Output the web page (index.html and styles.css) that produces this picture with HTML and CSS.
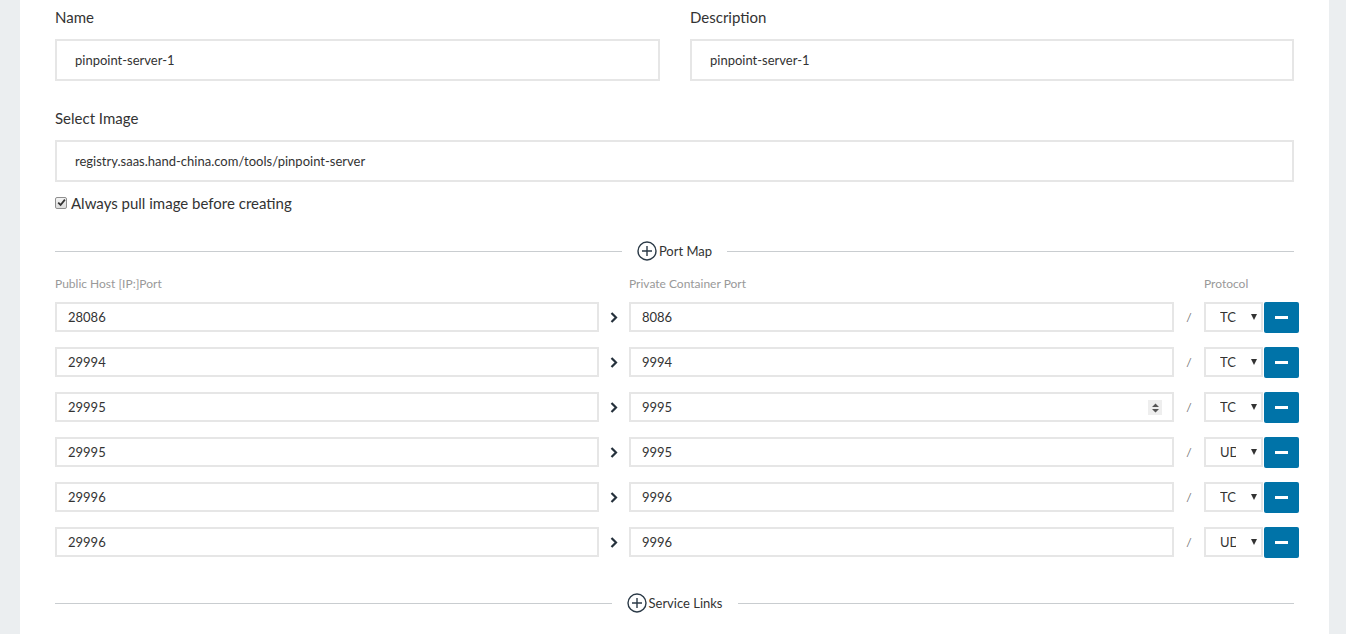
FILE: index.html
```html
<!DOCTYPE html>
<html>
<head>
<meta charset="utf-8">
<link rel="stylesheet" href="styles.css">
</head>
<body>
<div class="page">
  <div class="row2">
    <div class="field">
      <label class="lbl">Name</label>
      <div class="input big">pinpoint-server-1</div>
    </div>
    <div class="field">
      <label class="lbl">Description</label>
      <div class="input big">pinpoint-server-1</div>
    </div>
  </div>
  <div class="field image-field">
    <label class="lbl">Select Image</label>
    <div class="input big">registry.saas.hand-china.com/tools/pinpoint-server</div>
  </div>
  <div class="check">
    <span class="cbox"><svg width="9" height="9" viewBox="0 0 9 9"><path d="M1.2 4.6 L3.6 7 L7.9 1.6" fill="none" stroke="#333" stroke-width="1.8"/></svg></span>
    <span>Always pull image before creating</span>
  </div>

  <div class="divider">
    <span class="line"></span>
    <span class="dtitle"><svg class="plus" width="20" height="20" viewBox="0 0 20 20"><circle cx="10" cy="10" r="9" fill="none" stroke="#2b3a47" stroke-width="1.4"/><path d="M10 5v10M5 10h10" stroke="#2b3a47" stroke-width="1.4"/></svg>Port Map</span>
    <span class="line"></span>
  </div>

  <div class="ports">
    <div class="phead">
      <span class="c1">Public Host [IP:]Port</span>
      <span class="sep"></span>
      <span class="c2">Private Container Port</span>
      <span class="sep"></span>
      <span class="c3">Protocol</span>
    </div>
    <div class="prow">
      <div class="input small c1">28086</div>
      <span class="sep"><svg class="arrow" width="8" height="11" viewBox="0 0 8 11"><path d="M1.5 1 L6 5.5 L1.5 10" fill="none" stroke="#25313c" stroke-width="2.2"/></svg></span>
      <div class="input small c2">8086</div>
      <span class="sep slash">/</span>
      <div class="sel"><span class="seltext">TCP</span><span class="tri"></span></div>
      <button class="minus"><span></span></button>
    </div>
    <div class="prow">
      <div class="input small c1">29994</div>
      <span class="sep"><svg class="arrow" width="8" height="11" viewBox="0 0 8 11"><path d="M1.5 1 L6 5.5 L1.5 10" fill="none" stroke="#25313c" stroke-width="2.2"/></svg></span>
      <div class="input small c2">9994</div>
      <span class="sep slash">/</span>
      <div class="sel"><span class="seltext">TCP</span><span class="tri"></span></div>
      <button class="minus"><span></span></button>
    </div>
    <div class="prow">
      <div class="input small c1">29995</div>
      <span class="sep"><svg class="arrow" width="8" height="11" viewBox="0 0 8 11"><path d="M1.5 1 L6 5.5 L1.5 10" fill="none" stroke="#25313c" stroke-width="2.2"/></svg></span>
      <div class="input small c2 spinwrap">9995<span class="spin"><svg width="9" height="12" viewBox="0 0 9 12"><path d="M4.5 1.5 L8 5 H1 Z M4.5 10.5 L8 7 H1 Z" fill="#555"/></svg></span></div>
      <span class="sep slash">/</span>
      <div class="sel"><span class="seltext">TCP</span><span class="tri"></span></div>
      <button class="minus"><span></span></button>
    </div>
    <div class="prow">
      <div class="input small c1">29995</div>
      <span class="sep"><svg class="arrow" width="8" height="11" viewBox="0 0 8 11"><path d="M1.5 1 L6 5.5 L1.5 10" fill="none" stroke="#25313c" stroke-width="2.2"/></svg></span>
      <div class="input small c2">9995</div>
      <span class="sep slash">/</span>
      <div class="sel"><span class="seltext">UDP</span><span class="tri"></span></div>
      <button class="minus"><span></span></button>
    </div>
    <div class="prow">
      <div class="input small c1">29996</div>
      <span class="sep"><svg class="arrow" width="8" height="11" viewBox="0 0 8 11"><path d="M1.5 1 L6 5.5 L1.5 10" fill="none" stroke="#25313c" stroke-width="2.2"/></svg></span>
      <div class="input small c2">9996</div>
      <span class="sep slash">/</span>
      <div class="sel"><span class="seltext">TCP</span><span class="tri"></span></div>
      <button class="minus"><span></span></button>
    </div>
    <div class="prow">
      <div class="input small c1">29996</div>
      <span class="sep"><svg class="arrow" width="8" height="11" viewBox="0 0 8 11"><path d="M1.5 1 L6 5.5 L1.5 10" fill="none" stroke="#25313c" stroke-width="2.2"/></svg></span>
      <div class="input small c2">9996</div>
      <span class="sep slash">/</span>
      <div class="sel"><span class="seltext">UDP</span><span class="tri"></span></div>
      <button class="minus"><span></span></button>
    </div>
  </div>

  <div class="divider links">
    <span class="line"></span>
    <span class="dtitle"><svg class="plus" width="20" height="20" viewBox="0 0 20 20"><circle cx="10" cy="10" r="9" fill="none" stroke="#2b3a47" stroke-width="1.4"/><path d="M10 5v10M5 10h10" stroke="#2b3a47" stroke-width="1.4"/></svg>Service Links</span>
    <span class="line"></span>
  </div>
</div>
</body>
</html>
```

FILE: styles.css
```css
html, body {
  margin: 0;
  padding: 0;
  background: #ebeef0;
  font-family: Lato, "Liberation Sans", sans-serif;
  color: #333;
}
.page {
  margin: 0 17px 0 20px;
  background: #fff;
  padding: 7px 35px 0 35px;
  height: 627px;
  overflow: hidden;
}
.row2 {
  display: flex;
  gap: 30px;
}
.row2 .field:first-child { width: 605px; }
.row2 .field:last-child { flex: 1; }
.field { display: flex; flex-direction: column; }
.lbl {
  font-size: 15px;
  line-height: 20px;
  margin-bottom: 12px;
  color: #333;
}
.input {
  box-sizing: border-box;
  border: 2px solid #e6e6e6;
  background: #fff;
  font-size: 13px;
  color: #333;
  display: flex;
  align-items: center;
}
.input.big {
  height: 42px;
  padding-left: 18px;
}
.image-field { margin-top: 27px; }
.check {
  margin-top: 11px;
  display: flex;
  align-items: center;
  font-size: 15px;
  line-height: 20px;
  height: 20px;
}
.cbox {
  box-sizing: border-box;
  width: 12px;
  height: 12px;
  border: 1px solid #8f8f8f;
  border-radius: 2px;
  background: linear-gradient(#f4f4f4, #dcdcdc);
  display: flex;
  align-items: center;
  justify-content: center;
  margin-right: 4px;
  margin-top: -1px;
}
.divider {
  display: flex;
  align-items: center;
  margin-top: 28px;
  height: 20px;
}
.divider .line {
  flex: 1;
  height: 1px;
  background: #c9cdd0;
}
.dtitle {
  display: flex;
  align-items: center;
  font-size: 13px;
  color: #333;
  padding: 0 15px;
}
.plus { margin-right: 2px; }
.ports { margin-top: 15px; }
.phead {
  display: flex;
  font-size: 12px;
  color: #999;
  line-height: 16px;
  height: 16px;
  margin-bottom: 10px;
}
.c1 { width: 544px; flex: none; }
.c2 { width: 545px; flex: none; }
.sep {
  width: 30px;
  height: 30px;
  flex: none;
  display: flex;
  justify-content: center;
  align-items: center;
}
.phead .sep { height: 16px; }
.prow {
  display: flex;
  align-items: flex-start;
  height: 31px;
  margin-bottom: 14px;
}
.input.small {
  height: 30px;
  padding-left: 11px;
}
.arrow { margin-left: -1px; }
.slash {
  font-size: 12px;
  color: #777;
}
.spinwrap { position: relative; }
.spin {
  position: absolute;
  right: 10px;
  top: 6px;
  width: 14px;
  height: 15px;
  background: #eee;
  display: flex;
  align-items: center;
  justify-content: center;
}
.sel {
  flex: none;
  box-sizing: border-box;
  width: 59px;
  height: 30px;
  border: 2px solid #e6e6e6;
  display: flex;
  align-items: center;
  padding-left: 14px;
  font-size: 13px;
  color: #333;
}
.seltext {
  width: 16px;
  overflow: hidden;
  white-space: nowrap;
}
.tri {
  margin-left: 15px;
  width: 0;
  height: 0;
  border-left: 3px solid transparent;
  border-right: 3px solid transparent;
  border-top: 6px solid #333;
}
.minus {
  flex: none;
  width: 35px;
  height: 31px;
  margin-left: 1px;
  border: none;
  border-radius: 2px;
  background: #0073a8;
  padding: 0;
  display: flex;
  align-items: center;
  justify-content: center;
}
.minus span {
  width: 13px;
  height: 3px;
  background: #fff;
}
.links { margin-top: 35px; }
```
